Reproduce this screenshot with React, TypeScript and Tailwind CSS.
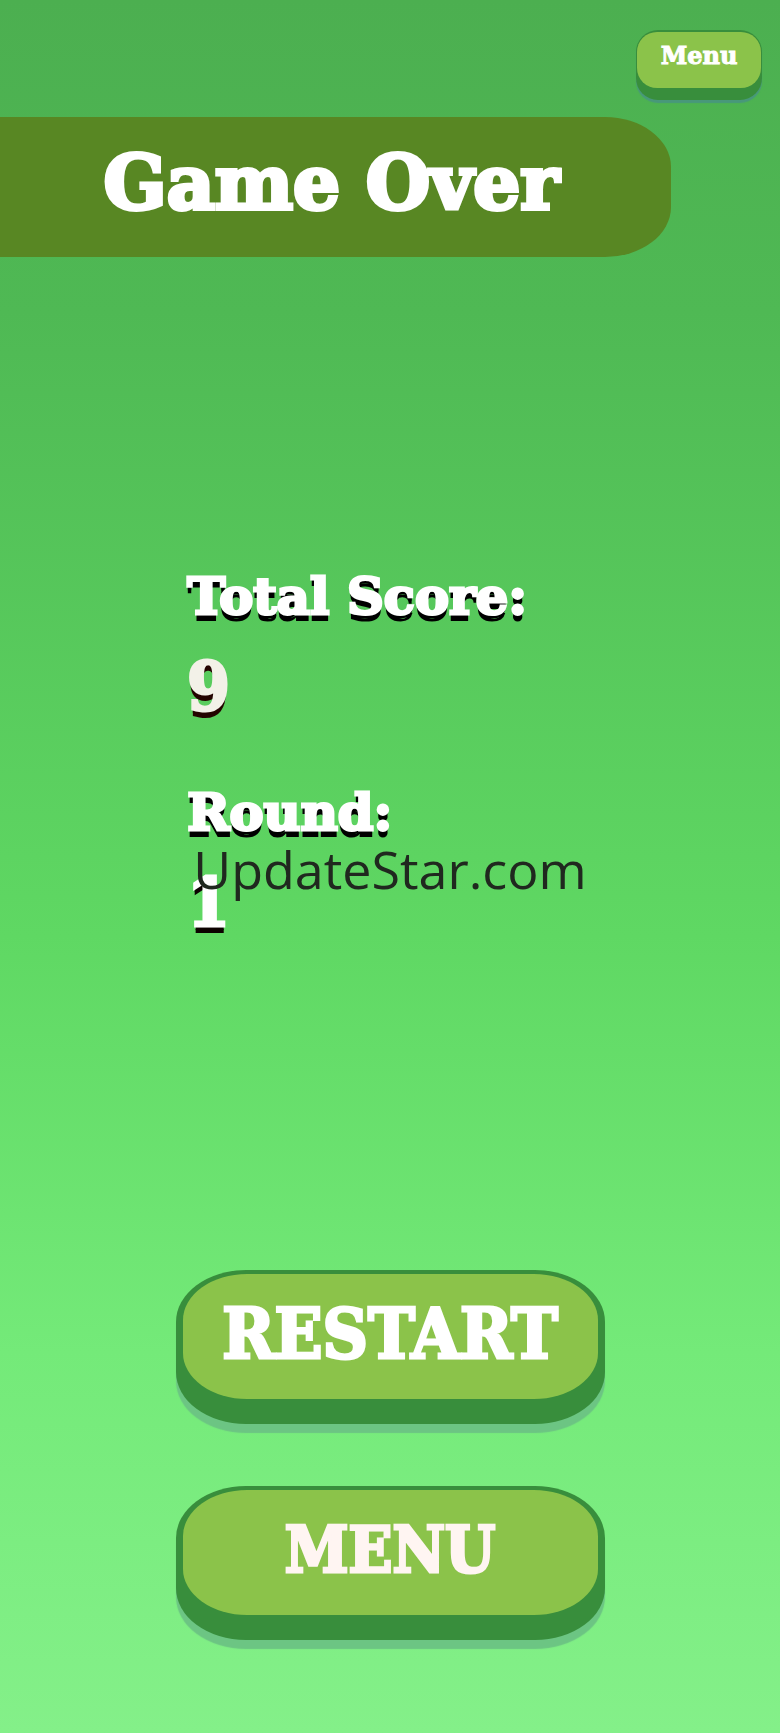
import clsx from "clsx";

const stats = [
  {
    label: "Total Score:",
    value: 9,
    valueColor:
      "text-[#f3f1e8] [-webkit-text-stroke:3px_#f3f1e8] [text-shadow:0_4px_0_#240400,0_7px_0_#240400]",
  },
  {
    label: "Round:",
    value: 1,
    valueColor:
      "text-white [-webkit-text-stroke:3px_#fff] [text-shadow:0_4px_0_#0c0200,0_7px_0_#0c0200]",
  },
];

function BigButton({ label, text }: { label: string; text: string }) {
  return (
    <button
      type="button"
      className="w-full rounded-[70px/52px] bg-[#388e3c] px-[7px] pt-1 pb-[25px] shadow-[0_9px_1px_#6cc583] cursor-pointer"
    >
      <span
        className={clsx(
          "block rounded-[64px/46px] bg-[#8bc34a] pt-[18px] pb-[23px] font-['DejaVu_Serif_Condensed','DejaVu_Serif',serif] leading-[84px]",
          text
        )}
      >
        {label}
      </span>
    </button>
  );
}

export default function App() {
  return (
    <main className="relative flex min-h-screen flex-col overflow-hidden bg-[linear-gradient(to_bottom,#4caf50_0%,#4fb954_18%,#5fd863_54%,#74ea79_78%,#84f089_100%)] font-['DejaVu_Serif',serif] font-bold text-white">
      <header className="flex justify-end pt-[30px] pr-[18px]">
        <button
          type="button"
          className="w-[126px] rounded-[22px] bg-[#388e3c] px-px pt-[2px] pb-3 shadow-[0_3px_1px_#48987a] cursor-pointer"
        >
          <span className="block rounded-[20px] bg-[#8bc34a] pt-1 pb-3 text-2xl leading-10 [-webkit-text-stroke:1px_#fff]">
            Menu
          </span>
        </button>
      </header>

      {/* Title banner */}
      <div className="mt-[17px] w-[86%] bg-[#588723] pt-[18px] pr-2 pb-[26px] text-center [border-bottom-right-radius:66px_50px] [border-top-right-radius:66px_50px]">
        <h1 className="text-[74px] leading-24 [-webkit-text-stroke:4px_#fff]">
          Game Over
        </h1>
      </div>

      {/* Results */}
      <dl className="flex flex-1 flex-col justify-center gap-9 pl-[24%]">
        {stats.map((stat) => (
          <div key={stat.label}>
            <dt className="text-[51px] leading-[60px] [-webkit-text-stroke:3px_#fff] [text-shadow:0_4px_0_#000,0_7px_0_#000]">
              {stat.label}
            </dt>
            <dd
              className={clsx(
                "font-['DejaVu_Serif_Condensed','DejaVu_Serif',serif] text-[68px] leading-[120px]",
                stat.valueColor
              )}
            >
              {stat.value}
            </dd>
          </div>
        ))}
      </dl>

      <nav className="mx-auto flex w-[55%] flex-col gap-[62px] pb-[93px]">
        <BigButton
          label="RESTART"
          text="text-[70px] text-white [-webkit-text-stroke:3px_#fff]"
        />
        <BigButton
          label="MENU"
          text="text-[64px] text-[#fff5f2] [-webkit-text-stroke:3px_#fff5f2]"
        />
      </nav>

      {/* Watermark sits over the middle of the screen */}
      <div className="pointer-events-none absolute inset-0 grid place-items-center pt-1">
        <p className="font-['Open_Sans','Noto_Sans',sans-serif] text-[52px] leading-[72px] font-normal text-[#20281f]">
          UpdateStar.com
        </p>
      </div>
    </main>
  );
}
